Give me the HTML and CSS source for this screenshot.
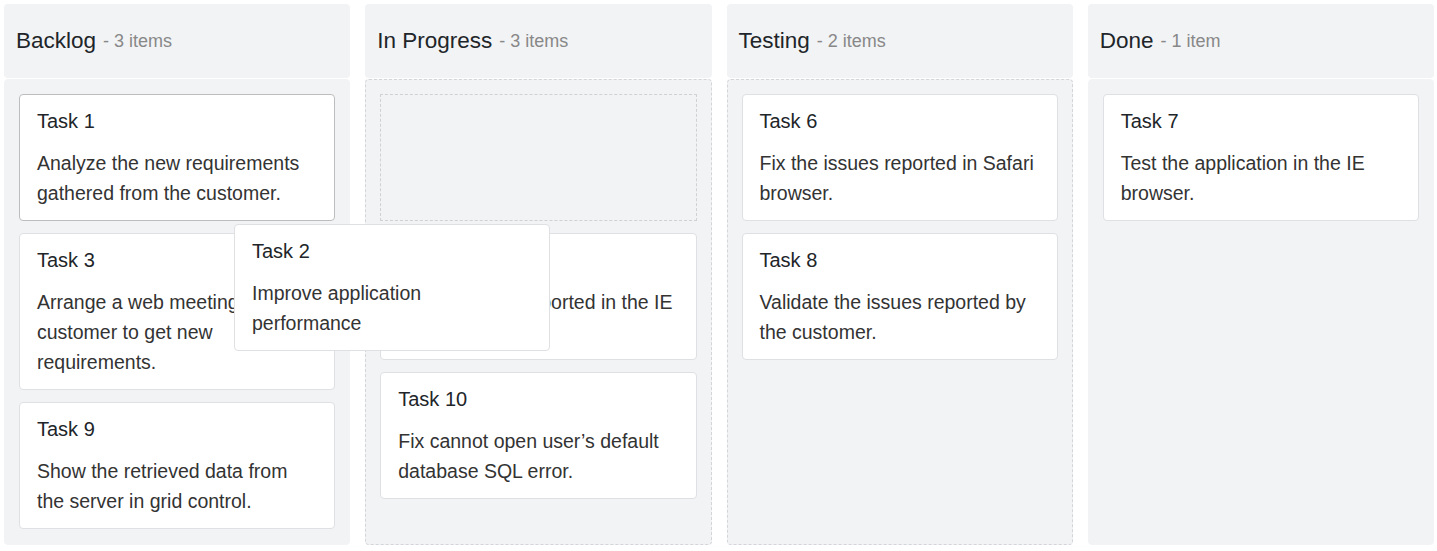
FILE: index.html
```html
<!DOCTYPE html>
<html lang="en">
<head>
<meta charset="utf-8">
<title>Kanban</title>
<link rel="stylesheet" href="styles.css">
</head>
<body>
<div class="board">
  <section class="column">
    <header class="col-header"><span class="col-title">Backlog</span><span class="col-count"> - 3 items</span></header>
    <div class="col-body">
      <div class="card card-active"><div class="card-title">Task 1</div><div class="card-text">Analyze the new requirements gathered from the customer.</div></div>
      <div class="card"><div class="card-title">Task 3</div><div class="card-text">Arrange a web meeting with the customer to get new requirements.</div></div>
      <div class="card"><div class="card-title">Task 9</div><div class="card-text">Show the retrieved data from the server in grid control.</div></div>
      <div class="card card-drag"><div class="card-title">Task 2</div><div class="card-text">Improve application performance</div></div>
    </div>
  </section>
  <section class="column">
    <header class="col-header"><span class="col-title">In Progress</span><span class="col-count"> - 3 items</span></header>
    <div class="col-body drop">
      <div class="placeholder"></div>
      <div class="card"><div class="card-title">Task 4</div><div class="card-text">Fix the issues reported in the IE browser.</div></div>
      <div class="card"><div class="card-title">Task 10</div><div class="card-text">Fix cannot open user’s default database SQL error.</div></div>
    </div>
  </section>
  <section class="column">
    <header class="col-header"><span class="col-title">Testing</span><span class="col-count"> - 2 items</span></header>
    <div class="col-body drop">
      <div class="card"><div class="card-title">Task 6</div><div class="card-text">Fix the issues reported in Safari browser.</div></div>
      <div class="card"><div class="card-title">Task 8</div><div class="card-text">Validate the issues reported by the customer.</div></div>
    </div>
  </section>
  <section class="column">
    <header class="col-header"><span class="col-title">Done</span><span class="col-count"> - 1 item</span></header>
    <div class="col-body">
      <div class="card"><div class="card-title">Task 7</div><div class="card-text">Test the application in the IE browser.</div></div>
    </div>
  </section>
</div>
</body>
</html>
```
FILE: styles.css
```css
* { box-sizing: border-box; }
html, body { margin: 0; padding: 0; background: #fff; }
body { font-family: "Liberation Sans", Arial, sans-serif; }

.board {
  display: grid;
  grid-template-columns: repeat(4, 1fr);
  column-gap: 15px;
  padding: 4px 3px 6px 4px;
  height: 551px;
}

.column {
  display: flex;
  flex-direction: column;
  gap: 1px;
  min-width: 0;
}

.col-header {
  height: 74px;
  background: #f2f3f5;
  border-radius: 4px;
  padding: 0 12px;
  display: flex;
  align-items: center;
  white-space: pre;
}
.col-title { font-size: 22.5px; color: #212529; }
.col-count { font-size: 18px; color: #888; margin-left: 2px; padding-top: 1px; }

.col-body {
  flex: 1;
  background: #f2f3f5;
  border-radius: 4px;
  border: 1px solid #f2f3f5;
  padding: 14px 14px;
  display: flex;
  flex-direction: column;
  gap: 12px;
  position: relative;
}
.col-body.drop { border: 1px dashed #d3d5d9; }

.card {
  background: #fff;
  border: 1px solid #dee0e3;
  border-radius: 4px;
  padding: 12px 17px 12px;
}
.card-active { border-color: #bdbdbd; }
.card-title { font-size: 20px; line-height: 28px; color: #212529; margin-bottom: 13px; }
.card-text { font-size: 19.5px; line-height: 30px; color: #333; }

.placeholder {
  height: 127px;
  border: 1px dashed #cfd1d5;
  flex-shrink: 0;
}

.card-drag {
  position: absolute;
  left: 229px;
  top: 144px;
  width: 316px;
  z-index: 10;
}
```
